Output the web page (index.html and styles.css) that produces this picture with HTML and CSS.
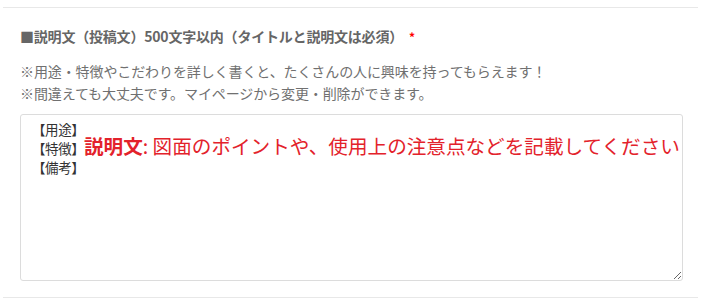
FILE: index.html
```html
<!DOCTYPE html>
<html lang="ja">
<head>
<meta charset="utf-8">
<link rel="stylesheet" href="styles.css">
</head>
<body>
<div class="section">
  <h3 class="label">■説明文（投稿文）500文字以内（タイトルと説明文は必須）<span class="req">*</span></h3>
  <p class="notes">※用途・特徴やこだわりを詳しく書くと、たくさんの人に興味を持ってもらえます！<br>※間違えても大丈夫です。マイページから変更・削除ができます。</p>
  <div class="field">
    <textarea class="desc">【用途】
【特徴】
【備考】</textarea>
    <div class="hint"><b>説明文</b>: 図面のポイントや、使用上の注意点などを記載してください</div>
  </div>
</div>
</body>
</html>
```
FILE: styles.css
```css
html, body {
  margin: 0;
  padding: 0;
  background: #fff;
}
body {
  font-family: "Noto Sans CJK JP", "Noto Sans", sans-serif;
}
.section {
  margin: 7px 5px 0 3px;
  border-top: 1px solid #e8e8e8;
  border-bottom: 1px solid #e8e8e8;
  padding: 18px 16px 16px 17px;
}
.label {
  margin: 0;
  font-size: 14px;
  line-height: 20px;
  font-weight: bold;
  color: #666;
  letter-spacing: -0.2px;
}
.req {
  color: #f00;
  margin-left: 6px;
  font-size: 12px;
}
.notes {
  margin: 13px 0 0;
  font-size: 14px;
  line-height: 22px;
  color: #707070;
  letter-spacing: -0.1px;
}
.field {
  position: relative;
  margin-top: 10px;
}
.desc {
  display: block;
  box-sizing: border-box;
  width: 663px;
  height: 167px;
  margin: 0;
  padding: 5px 11px;
  border: 1px solid #dcdcdc;
  border-radius: 3px;
  font-family: "Noto Sans CJK JP", sans-serif;
  font-size: 13.5px;
  line-height: 19px;
  letter-spacing: -0.4px;
  color: #333;
  background: #fff;
}
.hint {
  position: absolute;
  left: 64px;
  top: 20px;
  font-size: 19.6px;
  line-height: 24px;
  color: #e3222b;
  white-space: nowrap;
  pointer-events: none;
}
.hint b {
  font-weight: bold;
}
```
